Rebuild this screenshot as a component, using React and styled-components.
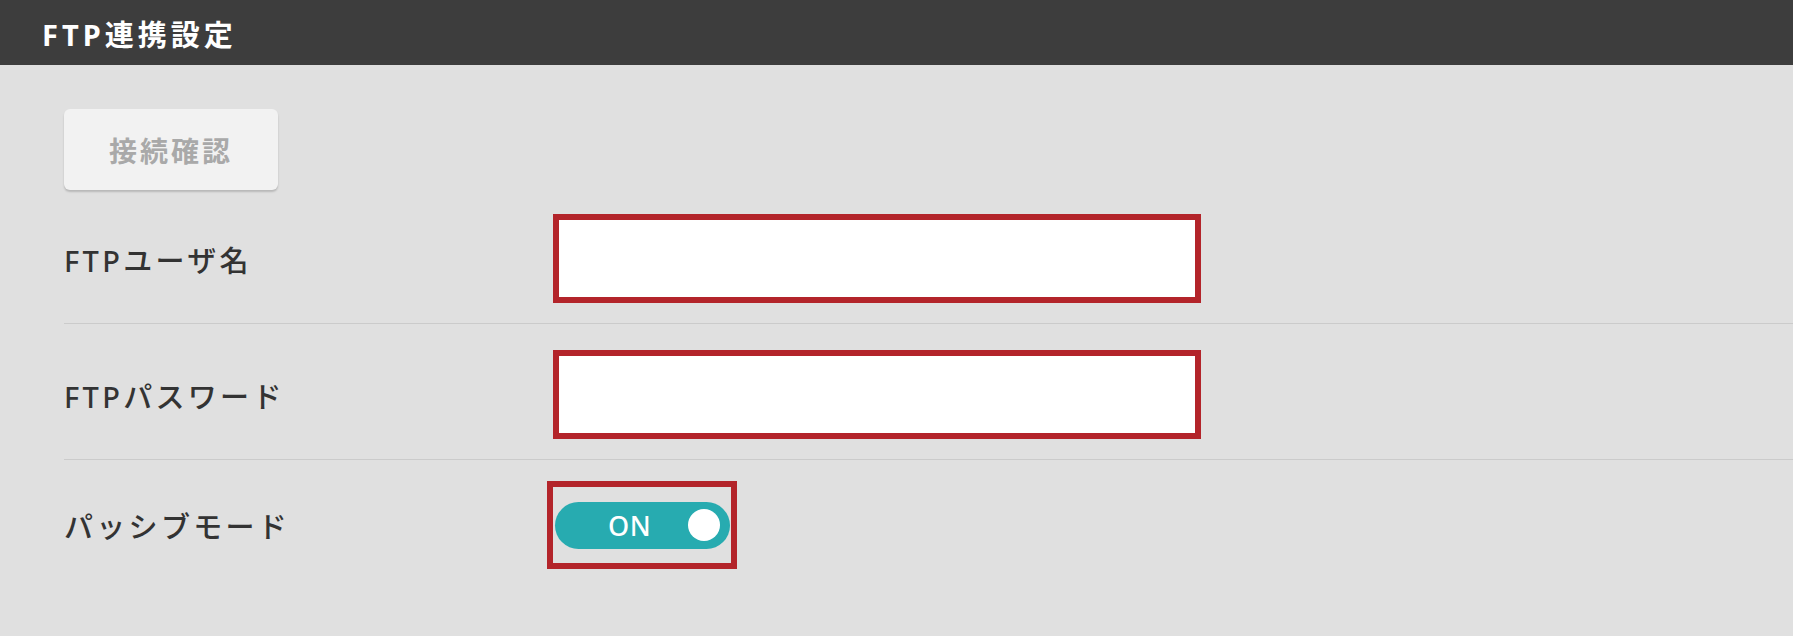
import styled, { createGlobalStyle } from "styled-components";

const GlobalStyle = createGlobalStyle`
  html, body {
    margin: 0;
    padding: 0;
    background: #e0e0e0;
  }
  body {
    font-family: "Noto Sans", "Noto Sans CJK JP", sans-serif;
    color: #333333;
  }
`;

const Page = styled.div`
  width: 100%;
  min-height: 636px;
  background: #e0e0e0;
`;

const Header = styled.header`
  height: 65px;
  background: #3d3d3d;
  display: flex;
  align-items: center;
  padding-left: 42px;
`;

const Title = styled.h1`
  margin: 0;
  font-size: 29px;
  font-weight: 700;
  letter-spacing: 4px;
  color: #ffffff;
`;

const Content = styled.div`
  padding: 44px 0 0 64px;
`;

const CheckButton = styled.button`
  width: 214px;
  height: 81px;
  border: none;
  border-radius: 6px;
  background: #f2f2f2;
  box-shadow: 0 2px 2px rgba(0, 0, 0, 0.18);
  font-family: "Noto Sans CJK JP", sans-serif;
  font-size: 28px;
  font-weight: 700;
  letter-spacing: 3px;
  color: #a9a9a9;
  cursor: default;
`;

const Row = styled.div`
  display: grid;
  grid-template-columns: ${(p) => p.$labelWidth}px 1fr;
  align-items: center;
  padding: ${(p) => p.$pad};
  border-bottom: ${(p) => (p.$last ? "none" : "1px solid #cbcbcb")};
`;

const Label = styled.span`
  font-family: "Noto Sans", "Noto Sans CJK JP", sans-serif;
  font-size: 29px;
  font-weight: 500;
  letter-spacing: 3.3px;
  color: #333333;
`;

const TextInput = styled.input`
  box-sizing: border-box;
  width: 648px;
  height: 89px;
  border: 6px solid #b3242a;
  background: #ffffff;
  outline: none;
  padding: 0 12px;
  font-size: 24px;
`;

const ToggleFrame = styled.div`
  box-sizing: border-box;
  width: 190px;
  height: 88px;
  border: 6px solid #b3242a;
  display: flex;
  align-items: center;
  padding-left: 2px;
`;

const Switch = styled.div`
  width: 175px;
  height: 47px;
  border-radius: 24px;
  background: ${(p) => (p.$on ? "#27abb0" : "#bdbdbd")};
  display: flex;
  align-items: center;
  justify-content: space-between;
  padding: 0 10px 0 53px;
  box-sizing: border-box;
`;

const SwitchText = styled.span`
  font-family: "Noto Sans", sans-serif;
  font-size: 27px;
  font-weight: 500;
  color: #ffffff;
  letter-spacing: 0.5px;
`;

const Knob = styled.span`
  width: 32px;
  height: 32px;
  border-radius: 50%;
  background: #ffffff;
`;

export default function App() {
  return (
    <>
      <GlobalStyle />
      <Page>
        <Header>
          <Title>FTP連携設定</Title>
        </Header>
        <Content>
          <CheckButton disabled>接続確認</CheckButton>
          <Row $labelWidth={489} $pad="24px 0 20px">
            <Label>FTPユーザ名</Label>
            <TextInput type="text" />
          </Row>
          <Row $labelWidth={489} $pad="26px 0 20px">
            <Label>FTPパスワード</Label>
            <TextInput type="password" />
          </Row>
          <Row $labelWidth={483} $pad="21px 0" $last>
            <Label>パッシブモード</Label>
            <ToggleFrame>
              <Switch $on>
                <SwitchText>ON</SwitchText>
                <Knob />
              </Switch>
            </ToggleFrame>
          </Row>
        </Content>
      </Page>
    </>
  );
}
